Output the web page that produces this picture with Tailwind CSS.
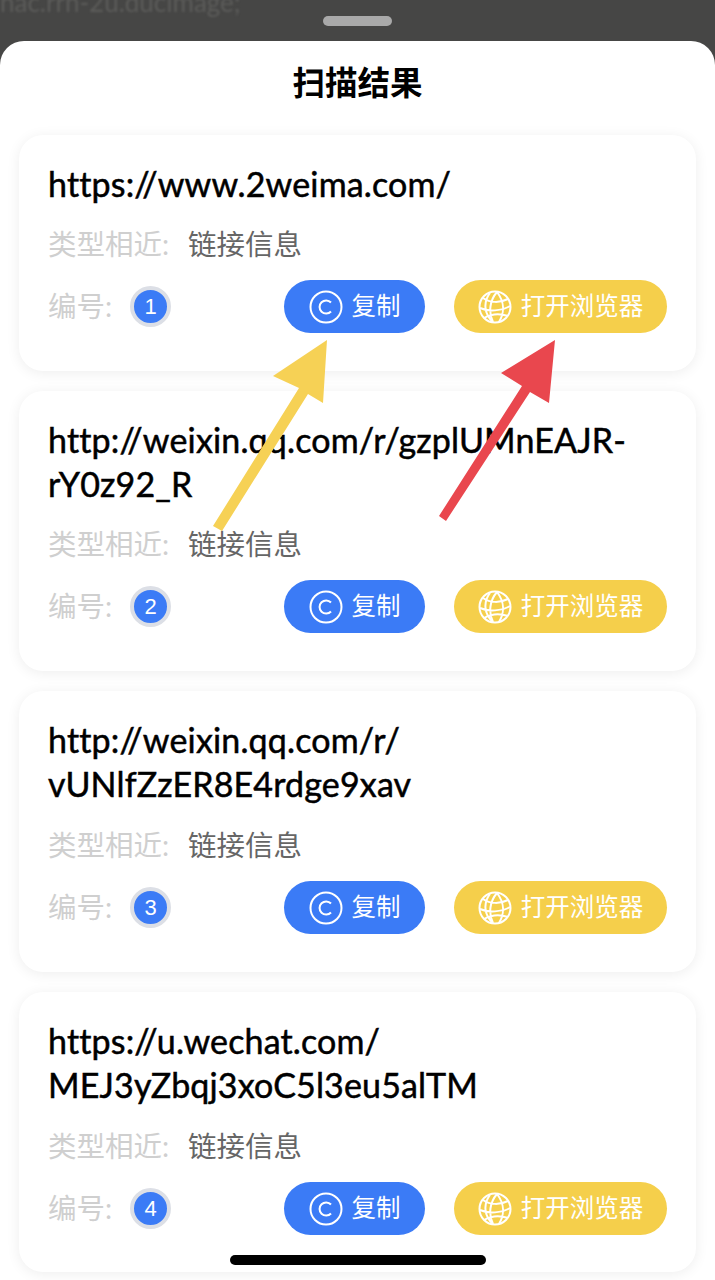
<!DOCTYPE html>
<html lang="en">
<head>
    <meta charset="UTF-8">
    <meta name="viewport" content="width=device-width, initial-scale=1.0">
    <title>扫描结果</title>
    <script src="https://cdn.jsdelivr.net/npm/@tailwindcss/browser@4"></script>
</head>
<body class="relative w-[715px] h-[1280px] overflow-hidden bg-[#464645] font-['Lato','Noto_Sans_CJK_SC',sans-serif]">
    <!-- page behind the sheet -->
    <div class="h-[41px] relative overflow-hidden">
        <p class="absolute left-0 top-[-17px] text-[26px] text-[#5c5c5a] whitespace-nowrap blur-[1px]">nac.rrn-2u.ducimage;</p>
        <div class="absolute left-[323px] top-[16px] w-[69px] h-[10px] rounded-full bg-[#a9a9a9]"></div>
    </div>

    <div class="bg-white rounded-t-[24px] h-[1239px] px-[19px]">
        <h1 class="h-[94px] pt-[19px] text-center text-[32.5px] leading-[45px] font-bold text-black">扫描结果</h1>

        <div class="flex flex-col gap-[20px]">
            <div class="rounded-[24px] bg-white shadow-[0_2px_14px_rgba(0,0,0,0.07)] pl-[29px] pr-[29px] pt-[27px] pb-[38px]">
                <p class="text-[34px] leading-[43.5px] tracking-[0.15px] text-black [-webkit-text-stroke:0.5px_black]">https://www.2weima.com/</p>
                <div class="mt-[16.5px] flex text-[28.5px] leading-[44px]"><span class="text-[#cfcfcf] w-[140px]">类型相近:</span><span class="text-[#666]">链接信息</span></div>
                <div class="mt-[14px] flex items-center h-[53px]">
                    <span class="text-[28.5px] text-[#cfcfcf] w-[82px]">编号:</span>
                    <span class="w-[41px] h-[41px] rounded-full bg-[#3b7bf6] border-[4px] border-[#dcdfe6] text-white text-[22px] font-['Liberation_Sans'] flex items-center justify-center">1</span>
                    <div class="ml-auto flex gap-[29px]">
                        <button class="w-[141px] h-[53px] rounded-full bg-[#3b7bf6] text-white text-[24.5px] flex items-center justify-center gap-[9px]">
                            <svg class="w-[34px] h-[34px]" viewBox="0 0 34 34" fill="none" stroke="white" stroke-width="2"><circle cx="17" cy="17" r="15.5"/><path d="M22 12.5a6.6 6.6 0 1 0 0 9"/></svg>复制
                        </button>
                        <button class="w-[213px] h-[53px] rounded-full bg-[#f5cf4b] text-white text-[24.5px] flex items-center justify-center gap-[9px]">
                            <svg class="w-[34px] h-[34px]" viewBox="0 0 34 34" fill="none" stroke="white" stroke-width="2"><circle cx="17" cy="17" r="15.5"/><path d="M12 3c-7 9-6 21 3 29M19 2c7 9 8 20 2 30M5 8c7 5 17 5 25 1M2 18c9 4 21 3 30-2M6 28c7-4 15-5 24-2M19 2c-7 8-9 20-4 30"/></svg>打开浏览器
                        </button>
                    </div>
                </div>
            </div>

            <div class="rounded-[24px] bg-white shadow-[0_2px_14px_rgba(0,0,0,0.07)] pl-[29px] pr-[29px] pt-[27px] pb-[38px]">
                <p class="text-[34px] leading-[43.5px] tracking-[0.15px] text-black [-webkit-text-stroke:0.5px_black] whitespace-nowrap">http://weixin.qq.com/r/gzplUMnEAJR-<br>rY0z92_R</p>
                <div class="mt-[17px] flex text-[28.5px] leading-[44px]"><span class="text-[#cfcfcf] w-[140px]">类型相近:</span><span class="text-[#666]">链接信息</span></div>
                <div class="mt-[14px] flex items-center h-[53px]">
                    <span class="text-[28.5px] text-[#cfcfcf] w-[82px]">编号:</span>
                    <span class="w-[41px] h-[41px] rounded-full bg-[#3b7bf6] border-[4px] border-[#dcdfe6] text-white text-[22px] font-['Liberation_Sans'] flex items-center justify-center">2</span>
                    <div class="ml-auto flex gap-[29px]">
                        <button class="w-[141px] h-[53px] rounded-full bg-[#3b7bf6] text-white text-[24.5px] flex items-center justify-center gap-[9px]">
                            <svg class="w-[34px] h-[34px]" viewBox="0 0 34 34" fill="none" stroke="white" stroke-width="2"><circle cx="17" cy="17" r="15.5"/><path d="M22 12.5a6.6 6.6 0 1 0 0 9"/></svg>复制
                        </button>
                        <button class="w-[213px] h-[53px] rounded-full bg-[#f5cf4b] text-white text-[24.5px] flex items-center justify-center gap-[9px]">
                            <svg class="w-[34px] h-[34px]" viewBox="0 0 34 34" fill="none" stroke="white" stroke-width="2"><circle cx="17" cy="17" r="15.5"/><path d="M12 3c-7 9-6 21 3 29M19 2c7 9 8 20 2 30M5 8c7 5 17 5 25 1M2 18c9 4 21 3 30-2M6 28c7-4 15-5 24-2M19 2c-7 8-9 20-4 30"/></svg>打开浏览器
                        </button>
                    </div>
                </div>
            </div>

            <div class="rounded-[24px] bg-white shadow-[0_2px_14px_rgba(0,0,0,0.07)] pl-[29px] pr-[29px] pt-[27px] pb-[38px]">
                <p class="text-[34px] leading-[43.5px] tracking-[0.15px] text-black [-webkit-text-stroke:0.5px_black] whitespace-nowrap">http://weixin.qq.com/r/<br>vUNlfZzER8E4rdge9xav</p>
                <div class="mt-[18px] flex text-[28.5px] leading-[44px]"><span class="text-[#cfcfcf] w-[140px]">类型相近:</span><span class="text-[#666]">链接信息</span></div>
                <div class="mt-[14px] flex items-center h-[53px]">
                    <span class="text-[28.5px] text-[#cfcfcf] w-[82px]">编号:</span>
                    <span class="w-[41px] h-[41px] rounded-full bg-[#3b7bf6] border-[4px] border-[#dcdfe6] text-white text-[22px] font-['Liberation_Sans'] flex items-center justify-center">3</span>
                    <div class="ml-auto flex gap-[29px]">
                        <button class="w-[141px] h-[53px] rounded-full bg-[#3b7bf6] text-white text-[24.5px] flex items-center justify-center gap-[9px]">
                            <svg class="w-[34px] h-[34px]" viewBox="0 0 34 34" fill="none" stroke="white" stroke-width="2"><circle cx="17" cy="17" r="15.5"/><path d="M22 12.5a6.6 6.6 0 1 0 0 9"/></svg>复制
                        </button>
                        <button class="w-[213px] h-[53px] rounded-full bg-[#f5cf4b] text-white text-[24.5px] flex items-center justify-center gap-[9px]">
                            <svg class="w-[34px] h-[34px]" viewBox="0 0 34 34" fill="none" stroke="white" stroke-width="2"><circle cx="17" cy="17" r="15.5"/><path d="M12 3c-7 9-6 21 3 29M19 2c7 9 8 20 2 30M5 8c7 5 17 5 25 1M2 18c9 4 21 3 30-2M6 28c7-4 15-5 24-2M19 2c-7 8-9 20-4 30"/></svg>打开浏览器
                        </button>
                    </div>
                </div>
            </div>

            <div class="rounded-[24px] bg-white shadow-[0_2px_14px_rgba(0,0,0,0.07)] pl-[29px] pr-[29px] pt-[27px] pb-[37px]">
                <p class="text-[34px] leading-[43.5px] tracking-[0.15px] text-black [-webkit-text-stroke:0.5px_black] whitespace-nowrap">https://u.wechat.com/<br>MEJ3yZbqj3xoC5l3eu5alTM</p>
                <div class="mt-[18px] flex text-[28.5px] leading-[44px]"><span class="text-[#cfcfcf] w-[140px]">类型相近:</span><span class="text-[#666]">链接信息</span></div>
                <div class="mt-[14px] flex items-center h-[53px]">
                    <span class="text-[28.5px] text-[#cfcfcf] w-[82px]">编号:</span>
                    <span class="w-[41px] h-[41px] rounded-full bg-[#3b7bf6] border-[4px] border-[#dcdfe6] text-white text-[22px] font-['Liberation_Sans'] flex items-center justify-center">4</span>
                    <div class="ml-auto flex gap-[29px]">
                        <button class="w-[141px] h-[53px] rounded-full bg-[#3b7bf6] text-white text-[24.5px] flex items-center justify-center gap-[9px]">
                            <svg class="w-[34px] h-[34px]" viewBox="0 0 34 34" fill="none" stroke="white" stroke-width="2"><circle cx="17" cy="17" r="15.5"/><path d="M22 12.5a6.6 6.6 0 1 0 0 9"/></svg>复制
                        </button>
                        <button class="w-[213px] h-[53px] rounded-full bg-[#f5cf4b] text-white text-[24.5px] flex items-center justify-center gap-[9px]">
                            <svg class="w-[34px] h-[34px]" viewBox="0 0 34 34" fill="none" stroke="white" stroke-width="2"><circle cx="17" cy="17" r="15.5"/><path d="M12 3c-7 9-6 21 3 29M19 2c7 9 8 20 2 30M5 8c7 5 17 5 25 1M2 18c9 4 21 3 30-2M6 28c7-4 15-5 24-2M19 2c-7 8-9 20-4 30"/></svg>打开浏览器
                        </button>
                    </div>
                </div>
            </div>
        </div>
    </div>

    <!-- annotation arrows on top of the screenshot -->
    <svg class="absolute left-0 top-0 pointer-events-none" width="715" height="1280" viewBox="0 0 715 1280">
        <path d="M327 340L273 376L299 388L213 526L222 531L308 394L323 403Z" fill="#f6d155"/>
        <path d="M555 340L501 373L522 386L439 516L446 521L530 392L549 403Z" fill="#e9474e"/>
    </svg>

    <!-- home indicator -->
    <div class="absolute left-[230px] top-[1255px] w-[256px] h-[10px] rounded-full bg-black"></div>
</body>
</html>
